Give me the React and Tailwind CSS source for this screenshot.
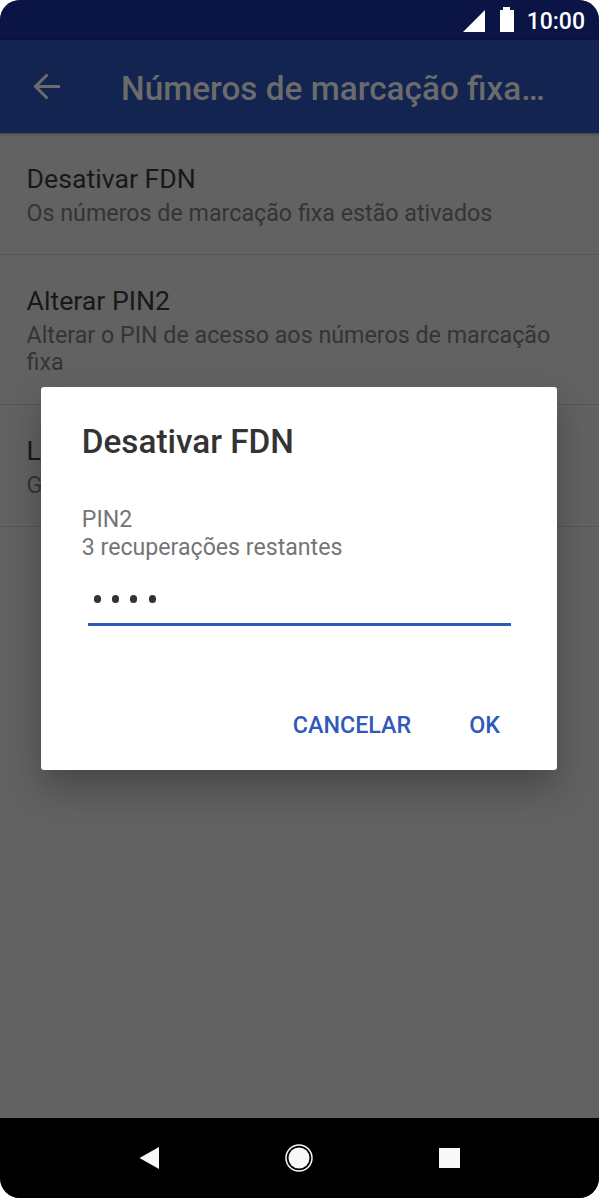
export default function App() {
  const rows = [
    ["Desativar FDN", "Os números de marcação fixa estão ativados", "h-[122px]"],
    ["Alterar PIN2", "Alterar o PIN de acesso aos números de marcação fixa", "h-[150px]"],
    ["L", "G", "h-[122px]"],
  ];
  return (
    <div className="relative w-[599px] h-[1198px] bg-white overflow-hidden font-[Roboto,sans-serif]">
      <div className="w-full h-full rounded-[20px] overflow-hidden flex flex-col bg-[#626262]">
        <div className="h-10 shrink-0 bg-[#0a1445] flex items-center justify-end pr-[14px] text-white">
          <svg className="w-[22px] h-[22px] mr-[15px] mt-[2px]" viewBox="0 0 22 22"><path d="M22 0V22H0Z" fill="white" /></svg>
          <svg className="w-[14px] h-[25px] mr-[13px] -mt-px" viewBox="0 0 14 25"><path d="M3 0h7v3h4v22H0V3h3Z" fill="white" /></svg>
          <span className="text-[23px] font-medium leading-none mt-[2px]">10:00</span>
        </div>
        <div className="relative h-[93px] shrink-0 bg-[#12244f] shadow-[0_1px_3px_rgba(0,0,0,0.35)] flex items-center">
          <svg className="w-7 h-7 ml-[33px] mt-px" viewBox="0 0 28 28" fill="none" stroke="#6b6b6b" strokeWidth="3"><path d="M27 13.5H2.500M14.500 1.500L2.500 13.500L14.500 25.500" /></svg>
          <span className="ml-[60px] mt-[5px] text-[33.35px] font-medium text-[#6b6b6b] whitespace-nowrap">Números de marcação fixa…</span>
        </div>
        <div className="flex-1">
          {rows.map(([t, s, h]) => (
            <div key={t} className={`${h} border-b-1 border-[#555] px-[26.5px] pt-[30px]`}>
              <div className="text-[26.7px] leading-[32px] text-[#181818]">{t}</div>
              <div className="mt-[4.6px] text-[23.25px] leading-[27.5px] text-[#343434]">{s}</div>
            </div>
          ))}
        </div>
        <div className="h-20 shrink-0 bg-black flex items-center justify-between px-[139px]">
          <svg className="w-5 h-6" viewBox="0 0 20 24"><path d="M20 1V23L0.500 12Z" fill="#f8f8f8" /></svg>
          <svg className="w-7 h-7" viewBox="0 0 28 28"><circle cx="14" cy="14" r="13" fill="none" stroke="#f8f8f8" strokeWidth="1.5" /><circle cx="14" cy="14" r="10.5" fill="#f8f8f8" /></svg>
          <div className="w-[21px] h-5 bg-[#f8f8f8]" />
        </div>
      </div>
      <div className="absolute left-[41.4px] top-[387.4px] w-[516px] h-[383px] rounded-[3px] bg-white shadow-[0_18px_36px_rgba(0,0,0,0.28)] flex flex-col px-[40.4px] pt-[35.6px]">
        <div className="text-[33.3px] leading-[38px] font-medium text-[#333]">Desativar FDN</div>
        <div className="mt-[45px] text-[23.15px] leading-[28px] text-[#757575]">PIN2<br />3 recuperações restantes</div>
        <div className="ml-[6px] w-[423px] h-[64px] border-b-[3px] border-[#2f59bb] flex items-center gap-[11.3px] pl-[6px] pt-[13px]">
          {[0, 1, 2, 3].map((i) => <span key={i} className="w-[7px] h-[8px] rounded-full bg-[#333]" />)}
        </div>
        <div className="mt-[85px] flex justify-end gap-[58px] pr-[17px] text-[23.3px] leading-[28px] font-medium text-[#2f59bb]">
          <span>CANCELAR</span><span>OK</span>
        </div>
      </div>
    </div>
  );
}
